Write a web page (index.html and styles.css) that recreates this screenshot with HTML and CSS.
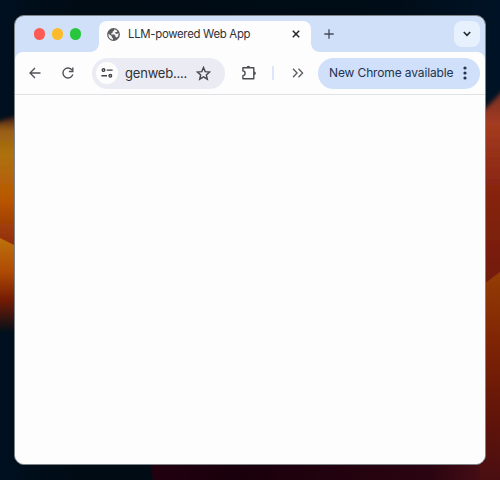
FILE: index.html
```html
<!DOCTYPE html>
<html lang="en">
<head>
<meta charset="utf-8">
<title>LLM-powered Web App</title>
<link rel="stylesheet" href="styles.css">
</head>
<body>
<svg class="wallpaper" viewBox="0 0 500 480" aria-hidden="true">
  <defs>
    <linearGradient id="sky" x1="0" y1="0" x2="1" y2="0"><stop offset="0" stop-color="#001020"/><stop offset=".15" stop-color="#000b14"/><stop offset=".75" stop-color="#000c16"/><stop offset="1" stop-color="#001326"/></linearGradient>
    <linearGradient id="gold" x1="0" y1="115" x2="0" y2="245" gradientUnits="userSpaceOnUse"><stop offset="0" stop-color="#3a1519"/><stop offset=".12" stop-color="#985e16"/><stop offset=".3" stop-color="#ad720c"/><stop offset=".65" stop-color="#b95704"/><stop offset="1" stop-color="#8f2c09"/></linearGradient>
    <linearGradient id="ember" x1="0" y1="238" x2="0" y2="333" gradientUnits="userSpaceOnUse"><stop offset="0" stop-color="#bd720c"/><stop offset=".35" stop-color="#b04b04"/><stop offset=".65" stop-color="#751b05"/><stop offset="1" stop-color="#000f1a"/></linearGradient>
    <linearGradient id="rust" x1="0" y1="95" x2="0" y2="290" gradientUnits="userSpaceOnUse"><stop offset="0" stop-color="#7b3023"/><stop offset=".15" stop-color="#a43b20"/><stop offset=".5" stop-color="#862410"/><stop offset="1" stop-color="#711b0b"/></linearGradient>
    <linearGradient id="amber" x1="0" y1="270" x2="0" y2="480" gradientUnits="userSpaceOnUse"><stop offset="0" stop-color="#943e04"/><stop offset=".35" stop-color="#7f2405"/><stop offset=".7" stop-color="#611409"/><stop offset="1" stop-color="#4a0e12"/></linearGradient>
    <linearGradient id="plum" x1="150" y1="0" x2="500" y2="0" gradientUnits="userSpaceOnUse"><stop offset="0" stop-color="#23000f"/><stop offset=".25" stop-color="#19000b"/><stop offset=".8" stop-color="#2b0411"/><stop offset="1" stop-color="#501015"/></linearGradient>
    <filter id="soft"><feGaussianBlur stdDeviation="2"/></filter>
  </defs>
  <rect width="500" height="480" fill="url(#sky)"/>
  <path d="M-8 124 20 115V260H-8Z" fill="url(#gold)" filter="url(#soft)"/>
  <path d="M0 238 20 248V333H0Z" fill="url(#ember)"/>
  <path d="M480 114 508 86V300H480Z" fill="url(#rust)" filter="url(#soft)"/>
  <path d="M150 460H500V480H153Z" fill="url(#plum)"/>
  <path d="M480 287 500 272V480H480Z" fill="url(#amber)"/>
</svg>

<main class="window">
  <header class="tab-strip">
    <div class="lights"><i class="light red"></i><i class="light yellow"></i><i class="light green"></i></div>
    <div class="tab">
      <svg class="globe" viewBox="0 0 13 13"><circle cx="6.5" cy="6.5" r="6.4" fill="#5a5c60"/><path d="M1.5 5.7 4.8 8.2V9.4L6 10.3V11.7C3.3 11.5 1.4 9.4 1.4 6.7ZM7 1.4V2.8L5.5 3.7V5L4.2 5.5V6.5H7.4L8.5 8V9L9.8 9.5C11.2 8.4 11.8 6.8 11.5 5.2L9.6 6 8.3 5.3V4H10.2V2.9C9.3 1.9 8.3 1.4 7 1.4Z" fill="#f5f5f5"/></svg>
      <span class="tab-title">LLM-powered Web App</span>
      <svg class="close" viewBox="0 0 8 8"><path d="m.8.8 6.4 6.4m0-6.4L.8 7.2" stroke="#222529" stroke-width="1.5"/></svg>
    </div>
    <svg class="plus" viewBox="0 0 10 10"><path d="M5 .3v9.4M.3 5h9.4" stroke="#414b59" stroke-width="1.3"/></svg>
    <div class="tab-search"><svg class="chevron" viewBox="0 0 8 6"><path d="m.8 1 3.2 3.3L7.2 1" fill="none" stroke="#22282e" stroke-width="1.6"/></svg></div>
  </header>

  <nav class="toolbar">
    <svg class="back" viewBox="0 0 12 12"><path d="M11.5 6H1.2M6 1 1 6l5 5" fill="none" stroke="#505256" stroke-width="1.35"/></svg>
    <svg class="reload" viewBox="0 0 12 12"><path d="M10.1 3.1A5 5 0 1 0 10.8 7.4" fill="none" stroke="#505256" stroke-width="1.4"/><path d="M10.8.5v4H6.9" fill="none" stroke="#505256" stroke-width="1.4"/></svg>
    <div class="address">
      <span class="site-info"><svg class="tune" viewBox="0 0 12 10"><g fill="none" stroke="#3e4044" stroke-width="1.4"><circle cx="2.5" cy="2.1" r="1.3"/><path d="M5.8 2.1H11.6M.4 7.8H6"/><circle cx="9.3" cy="7.8" r="1.3"/></g></svg></span>
      <span class="url">genweb....</span>
      <svg class="star" viewBox="0 0 15 15"><path d="m7.5 1.5 1.7 4.1 4.4.4-3.3 2.9 1 4.3-3.8-2.3-3.8 2.3 1-4.3L1.4 6l4.4-.4Z" fill="none" stroke="#48494e" stroke-width="1.45"/></svg>
    </div>
    <svg class="puzzle" viewBox="0 0 16 16"><path d="M1.9 2.7H12.8V13.7H1.9V10.6C4.8 10.6 4.8 5.9 1.9 5.9Z" fill="none" stroke="#4a4c50" stroke-width="1.4" stroke-linejoin="round"/><path d="M5.6 2.4a1.75 1.75 0 0 1 3.5 0ZM13.1 6.4a1.8 1.8 0 0 1 0 3.6Z" fill="#4a4c50"/></svg>
    <span class="divider"></span>
    <svg class="more" viewBox="0 0 12 10"><path d="m1 .8 4.1 4.2L1 9.2M6.5.8 10.6 5 6.5 9.2" fill="none" stroke="#5a5c60" stroke-width="1.3"/></svg>
    <div class="update"><span class="update-label">New Chrome available</span><svg class="dots" viewBox="0 0 4 14"><g fill="#23344f"><circle cx="2" cy="2" r="1.6"/><circle cx="2" cy="7" r="1.6"/><circle cx="2" cy="12" r="1.6"/></g></svg></div>
  </nav>
  <section class="page"></section>
</main>
</body>
</html>
```

FILE: styles.css
```css
* { box-sizing: border-box; }
body {
  margin: 0;
  width: 500px;
  height: 480px;
  display: grid;
  overflow: hidden;
  background: #000c16;
  font-family: Inter, "Liberation Sans", sans-serif;
}
svg { display: block; flex: none; }
.wallpaper { grid-area: 1 / 1; width: 500px; height: 480px; }
.window {
  grid-area: 1 / 1;
  z-index: 1;
  width: 472px;
  height: 450px;
  margin: 15px 14px;
  display: flex;
  flex-direction: column;
  overflow: hidden;
  border: 1px solid #7e8388;
  border-radius: 10px;
  background: #d1e0f9;
}
.tab-strip { display: flex; align-items: center; height: 36px; flex: none; padding-right: 5px; }
.lights { display: flex; gap: 7px; width: 84px; padding-left: 18.6px; }
.light { width: 11.3px; height: 11.3px; border-radius: 50%; }
.red { background: #fd5b54; }
.yellow { background: #fdba2c; }
.green { background: #27c63c; }
.tab {
  position: relative;
  display: flex;
  align-items: center;
  width: 212px;
  height: 31px;
  margin-top: 5px;
  padding: 0 11px 5px 8px;
  border-radius: 8px 8px 0 0;
  background: #fdfdfe;
}
.tab::before, .tab::after {
  content: "";
  position: absolute;
  bottom: 0;
  width: 8px;
  height: 8px;
}
.tab::before { left: -8px; background: radial-gradient(circle at 0 0, transparent 7.5px, #fdfdfe 8px); }
.tab::after { right: -8px; background: radial-gradient(circle at 100% 0, transparent 7.5px, #fdfdfe 8px); }
.globe { width: 13px; height: 13px; }
.tab-title { flex: 1; margin-left: 8px; font-size: 11.4px; line-height: 16px; letter-spacing: -0.3px; color: #303236; white-space: nowrap; }
.close { width: 8px; height: 8px; }
.plus { width: 10px; height: 10px; margin-left: 13px; }
.tab-search {
  display: flex;
  align-items: center;
  justify-content: center;
  width: 26px;
  height: 26px;
  margin-left: auto;
  border-radius: 8px;
  background: #e7f0fd;
}
.chevron { width: 8px; height: 6px; }
.toolbar {
  display: flex;
  align-items: center;
  flex: none;
  height: 43px;
  padding: 0 5px 0 14px;
  border-bottom: 1px solid #e0e1e5;
  border-radius: 8px 8px 0 0;
  background: #fdfdfe;
}
.back { width: 12px; height: 12px; }
.reload { width: 12px; height: 12px; margin-left: 21px; }
.address {
  display: flex;
  align-items: center;
  width: 133px;
  height: 31px;
  margin-left: 18px;
  padding: 0 14.5px 0 4px;
  border-radius: 16px;
  background: #ebebf4;
}
.site-info { display: flex; align-items: center; justify-content: center; width: 22px; height: 22px; border-radius: 50%; background: #fdfdfe; }
.tune { width: 12px; height: 10px; }
.url { margin-left: 7px; font-size: 13px; line-height: 18px; letter-spacing: -0.2px; color: #303236; white-space: nowrap; }
.star { width: 15px; height: 15px; margin-left: auto; }
.puzzle { width: 16px; height: 16px; margin-left: 16px; }
.divider { width: 2px; height: 14px; margin-left: 14.5px; background: #dce7fa; }
.more { width: 12px; height: 10px; margin-left: 18px; }
.update {
  display: flex;
  align-items: center;
  width: 162px;
  height: 31px;
  margin-left: auto;
  padding: 0 13px 0 11px;
  border-radius: 16px;
  background: #d0e0fb;
}
.update-label { font-size: 12px; line-height: 16px; letter-spacing: -0.13px; color: #22334e; white-space: nowrap; }
.dots { width: 4px; height: 14px; margin-left: auto; }
.page { flex: 1; background: #fdfdfd; }
```
